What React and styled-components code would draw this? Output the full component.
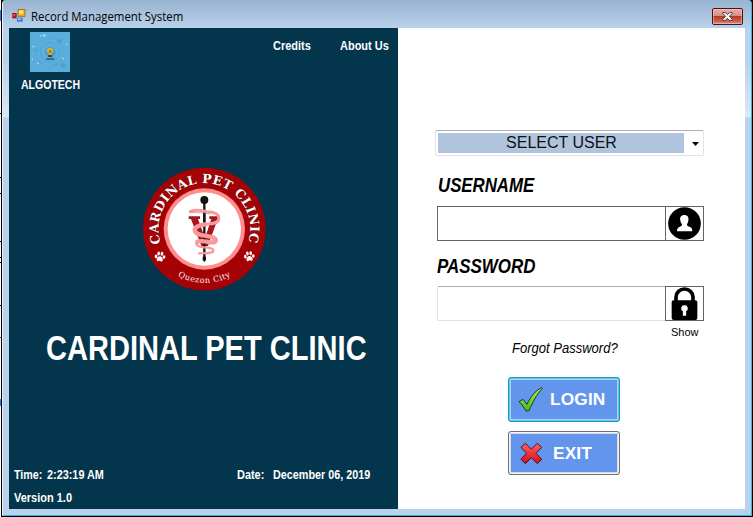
import React from "react";
import styled, { createGlobalStyle } from "styled-components";

const Global = createGlobalStyle`
  * { box-sizing: border-box; }
  html, body { margin: 0; padding: 0; overflow: hidden; }
  body { font-family: "Liberation Sans", Arial, sans-serif; background: #fff; }
`;

const Screen = styled.div`
  width: 753px;
  height: 517px;
  display: flex;
  background: #000;
`;

const DesktopEdge = styled.div`
  width: 1px;
  flex: none;
  margin-right: 1px;
  background:
    linear-gradient(#000, #000) 0 113px / 1px 1px no-repeat,
    linear-gradient(#000, #000) 0 177px / 1px 1px no-repeat,
    linear-gradient(#000, #000) 0 193px / 1px 1px no-repeat,
    linear-gradient(#000, #000) 0 241px / 1px 1px no-repeat,
    linear-gradient(#000, #000) 0 257px / 1px 1px no-repeat,
    linear-gradient(#000, #000) 0 262px / 1px 1px no-repeat,
    linear-gradient(#000, #000) 0 305px / 1px 1px no-repeat,
    linear-gradient(#a01818, #a01818) 0 337px / 1px 1px no-repeat,
    linear-gradient(#2a7fe0, #2a7fe0) 0 399px / 1px 7px no-repeat,
    linear-gradient(#2a7fe0, #2a7fe0) 0 10px / 1px 11px no-repeat,
    #fff;
`;

const Window = styled.div`
  width: 750px;
  height: 516px;
  display: flex;
  flex-direction: column;
  border-left: 1px solid #e6f0fa;
  border-right: 1px solid #35b8d8;
  border-bottom: 1px solid #35b8d8;
  border-radius: 4px 4px 0 0;
  background: linear-gradient(#98b3d0 0, #b9d1ea 28px, #b9d1ea 60px, #dbe8f6 117px, #b9d1ea 118px);
`;

const TitleBar = styled.header`
  height: 28px;
  flex: none;
  display: flex;
  align-items: center;
  padding: 4px 8px 0 9px;
  background: linear-gradient(#98b3d0, #b9d1ea);
  border-radius: 4px 4px 0 0;
`;

const Caption = styled.span`
  flex: 1;
  margin: 1px 0 0 5px;
  font: 12px/18px "Open Sans", "Noto Sans", sans-serif;
  color: #000;
  white-space: nowrap;
  transform: scaleX(0.95);
  transform-origin: left;
`;

const CloseButton = styled.button`
  width: 31px;
  height: 17px;
  padding: 0;
  display: grid;
  place-items: center;
  border: 1px solid #431422;
  border-radius: 2px;
  background: linear-gradient(#e8aea4 0, #d98b7f 48%, #b83c25 50%, #c95f48 80%, #dd9480 100%);
  box-shadow: inset 0 0 0 1px rgba(255, 210, 200, 0.5);
`;

const Client = styled.main`
  flex: none;
  margin-left: 6px;
  width: 736px;
  height: 481px;
  display: grid;
  grid-template-columns: 389px 347px;
  background: #fff;
`;

const Brand = styled.section`
  background: #03364c;
  color: #fff;
  display: flex;
  flex-direction: column;
`;

const Text = styled.span`
  display: block;
  white-space: nowrap;
  width: ${(p) => p.$w}px;
  font-size: ${(p) => p.$size || 13}px;
  line-height: ${(p) => p.$lh || 16}px;
  font-weight: ${(p) => (p.$regular ? 400 : 700)};
  font-style: ${(p) => (p.$italic ? "italic" : "normal")};
  transform: scaleX(${(p) => p.$k || 0.82});
  transform-origin: left;
`;

const TopRow = styled.div`
  height: 64px;
  display: flex;
  align-items: flex-start;
  padding: 4px 9px 0 12px;
`;

const Team = styled.div`
  width: 60px;
  margin-right: 192px;
  display: flex;
  flex-direction: column;
  gap: 5px;
  svg { margin-left: 9px; display: block; }
`;

const Links = styled.nav`
  display: flex;
  gap: 28px;
  padding-top: 6px;
`;

const Emblem = styled.div`
  margin: 68px 0 0 126px;
  height: 135px;
  svg { display: block; }
`;

const Title = styled.h1`
  margin: 33px 0 0 37px;
  height: 40px;
  font-size: inherit;
`;

const Footer = styled.footer`
  margin: auto 0 3px 5px;
  display: flex;
  flex-direction: column;
  gap: 7px;
`;

const StatusRow = styled.div`
  display: flex;
`;

const Login = styled.form`
  display: flex;
  flex-direction: column;
  padding: 102px 41px 0 37px;
`;

const Combo = styled.div`
  width: 269px;
  height: 26px;
  display: flex;
  align-items: center;
  padding: 0 4px 0 2px;
  border: 1px solid #e2e3ea;
  border-top-color: #abadb3;
  border-radius: 2px;
`;

const ComboValue = styled.div`
  width: 246px;
  height: 20px;
  margin-bottom: 1px;
  background: #b0c4de;
  color: #111;
  font-size: 16px;
  line-height: 20px;
  padding-left: 1px;
  text-align: center;
`;

const Arrow = styled.svg`
  margin: 2px 0 0 8px;
`;

const Label = styled.label`
  height: 24px;
  margin: ${(p) => p.$top}px 0 ${(p) => p.$bottom}px ${(p) => p.$left}px;
  color: #000;
`;

const Field = styled.div`
  width: 267px;
  height: 35px;
  margin-left: 2px;
  display: flex;
`;

const Input = styled.input`
  width: 228px;
  height: 35px;
  outline: 0;
  background: #fff;
  border: 1px solid ${(p) => (p.$soft ? "#e2e3ea" : "#646464")};
  border-top-color: ${(p) => (p.$soft ? "#abadb3" : "#646464")};
  border-right: 0;
  border-radius: ${(p) => (p.$soft ? "2px 0 0 2px" : 0)};
`;

const IconBox = styled.div`
  width: 39px;
  height: 35px;
  border: 1px solid #646464;
  svg { display: block; }
`;

const Show = styled.div`
  margin: 4px 0 0 236px;
  height: 14px;
  font-size: 11px;
  line-height: 14px;
  color: #000;
`;

const Forgot = styled.div`
  margin: 0 0 0 77px;
  height: 18px;
  color: #000;
`;

const Actions = styled.div`
  margin: 20px 0 0 73px;
  display: flex;
  flex-direction: column;
  gap: 9px;
`;

const Action = styled.button`
  width: 112px;
  height: ${(p) => (p.$focus ? 45 : 44)}px;
  padding: 0 0 1px 8px;
  display: flex;
  align-items: center;
  gap: ${(p) => p.$gap}px;
  border: 1px solid ${(p) => (p.$focus ? "#2c8fbe" : "#707070")};
  border-radius: 3px;
  background: #6495ed;
  box-shadow: ${(p) =>
    p.$focus
      ? "inset 0 0 0 1px #48d2f5, inset 0 0 0 2px #a9d6f4"
      : "inset 0 0 0 1px #f5f5f5, inset 0 0 0 2px #d5dbe4"};
  color: #fff;
  font: bold 17.3px/20px "Liberation Sans", Arial, sans-serif;
  letter-spacing: 0.15px;
`;

const AppIcon = () => (
  <svg width="14" height="14" viewBox="0 0 42 42">
    <rect x="1" y="12" width="13" height="16" fill="#a40d12" />
    <rect x="4" y="15" width="6" height="7" fill="#e65b50" />
    <rect x="18" y="1" width="21" height="21" fill="#e8a800" stroke="#8a6410" strokeWidth="2" />
    <rect x="21" y="4" width="13" height="12" fill="#ffe27a" />
    <rect x="15" y="26" width="17" height="12" fill="#3c79e0" />
    <rect x="18" y="28" width="8" height="5" fill="#9cc3ff" />
  </svg>
);

const TeamIcon = () => (
  <svg width="40" height="40" viewBox="0 0 120 120">
    <rect width="120" height="120" fill="#5aaedb" />
    <g fill="none" stroke="#509fd0" strokeWidth="2">
      <circle cx="60" cy="60" r="42" strokeDasharray="6 4" />
      <circle cx="60" cy="60" r="29" />
    </g>
    <g fill="#4e9fd0">
      <circle cx="88" cy="28" r="7" /><circle cx="100" cy="100" r="8" />
      <circle cx="15" cy="55" r="4" /><circle cx="28" cy="90" r="4" /><circle cx="78" cy="98" r="4" />
    </g>
    <g fill="#a5daf3">
      <path d="M41 6h3v3h3v3h-3v3h-3v-3h-3v-3h3z" />
      <rect x="31" y="9" width="4" height="4" /><rect x="8" y="41" width="5" height="5" />
      <rect x="108" y="35" width="4" height="5" /><rect x="22" y="91" width="5" height="5" />
      <rect x="97" y="77" width="5" height="5" /><rect x="5" y="80" width="4" height="4" />
    </g>
    <circle cx="61" cy="60" r="16" fill="#4f9dc5" />
    <path d="M50 55q2-8 10-8 9 0 10 8 1 5-5 9v5h-9v-5q-7-4-6-9z" fill="#d8b52b" />
    <path d="M57 55h7v7h-7z" fill="#8a7726" />
    <path d="M55 69h11v6H55z" fill="#293f50" />
    <path d="M48 79h25v4H48z" fill="#234c70" />
  </svg>
);

const Paw = ({ x, y, r }) => (
  <g transform={`translate(${x} ${y}) rotate(${r})`} fill="#fff">
    <path d="M0-2C6-2 12 7 8 12 5 15 3 11 0 11S-5 15-8 12C-12 7-6-2 0-2z" />
    <ellipse cx="-12" cy="-1" rx="4" ry="5.5" /><ellipse cx="-5" cy="-10" rx="4" ry="6" />
    <ellipse cx="5" cy="-10" rx="4" ry="6" /><ellipse cx="12" cy="-1" rx="4" ry="5.5" />
  </g>
);

const SNAKE_NECK = "M166 154C184 147 199 151 214 155C238 155 254 162 251 178C248 191 230 191 211 193";
const SNAKE_BODY = "M211 193C190 195 176 202 180 213C184 226 205 226 222 229C242 232 248 242 238 247C226 249 203 239 187 245";
const SNAKE_TAIL = "M187 245C178 253 190 261 206 262C226 262 239 267 234 275C227 282 209 278 192 280";

const ClinicLogo = () => (
  <svg width="140" height="135" viewBox="0 0 420 405">
    <defs>
      <path id="upper" d="M77.500 250A137.400 137.400 0 1 1 338.500 250" />
      <path id="lower" d="M126 346A162 162 0 0 0 292 346" />
    </defs>
    <circle cx="208" cy="207" r="184" fill="#a50205" />
    <circle cx="208" cy="207" r="122" fill="#fe8d8d" />
    <circle cx="208" cy="207" r="110" fill="#fff" />
    <text fontFamily="DejaVu Serif, serif" fontWeight="700" fontSize="38" fill="#fff" stroke="#4c0004" strokeWidth="2" paintOrder="stroke">
      <textPath href="#upper" textLength="515" lengthAdjust="spacing">CARDINAL PET CLINIC</textPath>
    </text>
    <text fontFamily="DejaVu Serif, serif" fontSize="24" fill="#fff0f0"><textPath href="#lower" startOffset="3" textLength="166" lengthAdjust="spacing">Quezon City</textPath></text>
    <Paw x={75} y={291} r={5} />
    <Paw x={343} y={290} r={-5} />
    <path d="M161 169h34v8h-6l21 57 19-57h-6v-8h32v8h-7l-29 81h-20l-31-81h-7z" fill="#a5151c" />
    <path d="M208 120v179" stroke="#151515" strokeWidth="7" />
    <circle cx="208" cy="120" r="12" fill="#111" />
    <path d="M203 290h10v10l-5 6-5-6z" fill="#111" />
    <g fill="none" strokeLinecap="round" strokeLinejoin="round">
      <path d={SNAKE_NECK} stroke="#f79a9d" strokeWidth="9" />
      <path d={SNAKE_BODY} stroke="#f79a9d" strokeWidth="13" />
      <path d={SNAKE_TAIL} stroke="#f79a9d" strokeWidth="7" />
      <path d="M164 157c18 2 36-1 60 5" stroke="#c87a80" strokeWidth="2" />
    </g>
    <path d="M208 160v26" stroke="#151515" strokeWidth="7" />
  </svg>
);

const UserIcon = () => (
  <svg width="37" height="33" viewBox="0 0 111 99">
    <circle cx="55.500" cy="49.500" r="49" fill="#000" />
    <path d="M55 24c10 0 14 7 12 17-1 6-3 9-4 11-1 5 4 6 9 8 6 3 7 7 7 13H33c0-6 1-10 7-13 4-2 9-3 8-8-1-2-4-5-5-11-2-10 2-17 12-17z" fill="#fff" />
  </svg>
);

const LockIcon = () => (
  <svg width="37" height="33" viewBox="0 0 111 99">
    <path d="M30 43V30a25.500 24 0 0 1 51 0v13" fill="none" stroke="#000" strokeWidth="11" />
    <rect x="17" y="40" width="77" height="59" rx="6" fill="#000" />
    <path d="M55.500 55a9 9 0 0 1 5 17v14h-10V72a9 9 0 0 1 5-17z" fill="#fff" />
  </svg>
);

const CheckIcon = () => (
  <svg width="28" height="27" viewBox="0 0 84 81">
    <defs><linearGradient id="green" x1="0" y1="0" x2="0" y2="1"><stop stopColor="#b4f05a" /><stop offset="1" stopColor="#48b51d" /></linearGradient></defs>
    <path d="M6 47l12-7 12 15C40 34 54 14 74 5l1 3C60 24 47 48 36 74l-9 1C20 65 15 55 6 47z" fill="url(#green)" stroke="#173b13" strokeWidth="3" strokeLinejoin="round" />
  </svg>
);

const CrossIcon = () => (
  <svg width="28" height="24" viewBox="0 0 84 72">
    <defs><linearGradient id="red" x1="0" y1="0" x2="0" y2="1"><stop stopColor="#ff6065" /><stop offset="1" stopColor="#d90b18" /></linearGradient></defs>
    <path d="M25 7l18 17L61 7l13 12-17 18 17 18-13 13-18-18-18 18-13-13 17-18-17-18z" fill="url(#red)" stroke="#44121b" strokeWidth="3" strokeLinejoin="round" />
  </svg>
);

export default function App() {
  return (
    <Screen>
      <Global />
      <DesktopEdge />
      <Window>
        <TitleBar>
          <AppIcon />
          <Caption>Record Management System</Caption>
          <CloseButton type="button" aria-label="Close">
            <svg width="11" height="9" viewBox="0 0 33 27">
              <path d="M2 2h9l5 6 6-6h9v3l-9 8 9 9v3h-9l-6-6-5 6H2v-3l9-9-9-8z" fill="#f5f5f5" stroke="#4e4350" strokeWidth="3" />
            </svg>
          </CloseButton>
        </TitleBar>
        <Client>
          <Brand>
            <TopRow>
              <Team>
                <TeamIcon />
                <Text $w={60} $k={0.81}>ALGOTECH</Text>
              </Team>
              <Links>
                <Text $w={39} $k={0.845}>Credits</Text>
                <Text $w={50} $k={0.845}>About Us</Text>
              </Links>
            </TopRow>
            <Emblem><ClinicLogo /></Emblem>
            <Title><Text $w={320} $size={35} $lh={40} $k={0.83}>CARDINAL PET CLINIC</Text></Title>
            <Footer>
              <StatusRow>
                <Text $w={33}>Time:</Text>
                <Text $w={190} $k={0.835}>2:23:19 AM</Text>
                <Text $w={36} $k={0.84}>Date:</Text>
                <Text $w={100} $k={0.83}>December 06, 2019</Text>
              </StatusRow>
              <Text $w={60} $k={0.845}>Version 1.0</Text>
            </Footer>
          </Brand>
          <Login>
            <Combo>
              <ComboValue>SELECT USER</ComboValue>
              <Arrow width="7" height="4" viewBox="0 0 7 4"><path d="M0 0h7L3.500 4z" /></Arrow>
            </Combo>
            <Label $top={17} $bottom={9} $left={3}>
              <Text $w={96} $size={20.5} $lh={24} $italic>USERNAME</Text>
            </Label>
            <Field>
              <Input aria-label="Username" />
              <IconBox><UserIcon /></IconBox>
            </Field>
            <Label $top={13} $bottom={8} $left={2}>
              <Text $w={99} $size={20.5} $lh={24} $italic $k={0.825}>PASSWORD</Text>
            </Label>
            <Field>
              <Input type="password" aria-label="Password" $soft />
              <IconBox><LockIcon /></IconBox>
            </Field>
            <Show>Show</Show>
            <Forgot><Text $w={106} $size={15.5} $lh={18} $k={0.84} $regular $italic>Forgot Password?</Text></Forgot>
            <Actions>
              <Action type="button" $focus $gap={5}><CheckIcon />LOGIN</Action>
              <Action type="button" $gap={8}><CrossIcon />EXIT</Action>
            </Actions>
          </Login>
        </Client>
      </Window>
    </Screen>
  );
}
